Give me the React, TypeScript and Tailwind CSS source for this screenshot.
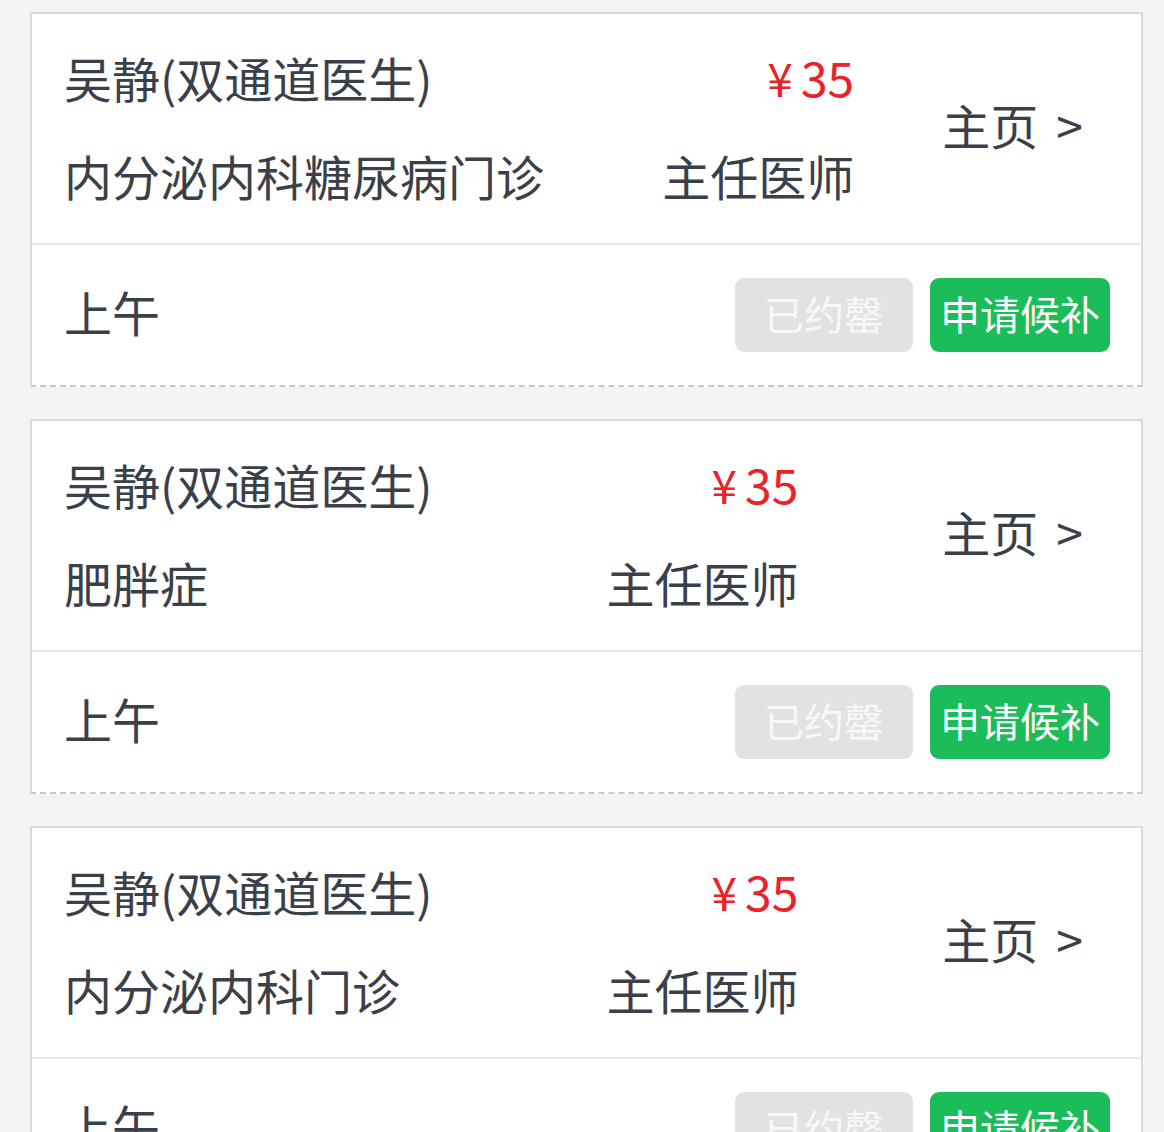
const doctors = [
  { name: "吴静(双通道医生)", dept: "内分泌内科糖尿病门诊", price: "35", title: "主任医师", period: "上午" },
  { name: "吴静(双通道医生)", dept: "肥胖症", price: "35", title: "主任医师", period: "上午" },
  { name: "吴静(双通道医生)", dept: "内分泌内科门诊", price: "35", title: "主任医师", period: "上午" },
];

type Doctor = (typeof doctors)[number];

const DoctorCard = ({ d }: { d: Doctor }) => {
  return (
    <div className="ml-[30px] mr-[21px] bg-white border-2 border-[#dadada] border-b-[#c8c8c8] [border-bottom-style:dashed]">
      <div className="flex items-center justify-between pl-[32px] pr-[58px] pt-[30px] pb-[36px] border-b-2 border-[#e8e8e8]">
        <div className="flex flex-col gap-[34px]">
          <p className="leading-[64px]">{d.name}</p>
          <p className="leading-[64px]">{d.dept}</p>
        </div>
        <div className="w-[222px] flex flex-col gap-[34px] text-right">
          <p className="leading-[64px] text-[#e8232a]">
            <span className="text-[46px]">¥</span>
            <span className="ml-[8px]">{d.price}</span>
          </p>
          <p className="leading-[64px]">{d.title}</p>
        </div>
        <div className="leading-[64px] mb-[4px]">
          <span>主页</span>
          <span className="ml-[18px]">&gt;</span>
        </div>
      </div>
      <div className="h-[140px] flex items-center justify-between pl-[32px] pr-[31px]">
        <span className="leading-[64px] mb-[8px]">{d.period}</span>
        <div className="flex gap-[17px]">
          <button className="w-[178px] h-[74px] rounded-[9px] bg-[#e2e2e2] text-[#f8f8f8] text-[40px] leading-[64px] pb-[4px]">
            已约罄
          </button>
          <button className="w-[180px] h-[74px] rounded-[9px] bg-[#1bbd5b] text-white text-[40px] leading-[64px] pb-[4px]">
            申请候补
          </button>
        </div>
      </div>
    </div>
  );
};

export default function App() {
  return (
    <div
      className="min-h-screen bg-[#f4f4f4] pt-[12px] flex flex-col gap-[32px] text-[48px] text-[#3a4049]"
      style={{ fontFamily: '"Noto Sans CJK SC", "Noto Sans", sans-serif' }}
    >
      {doctors.map((d, i) => (
        <DoctorCard key={i} d={d} />
      ))}
    </div>
  );
}
